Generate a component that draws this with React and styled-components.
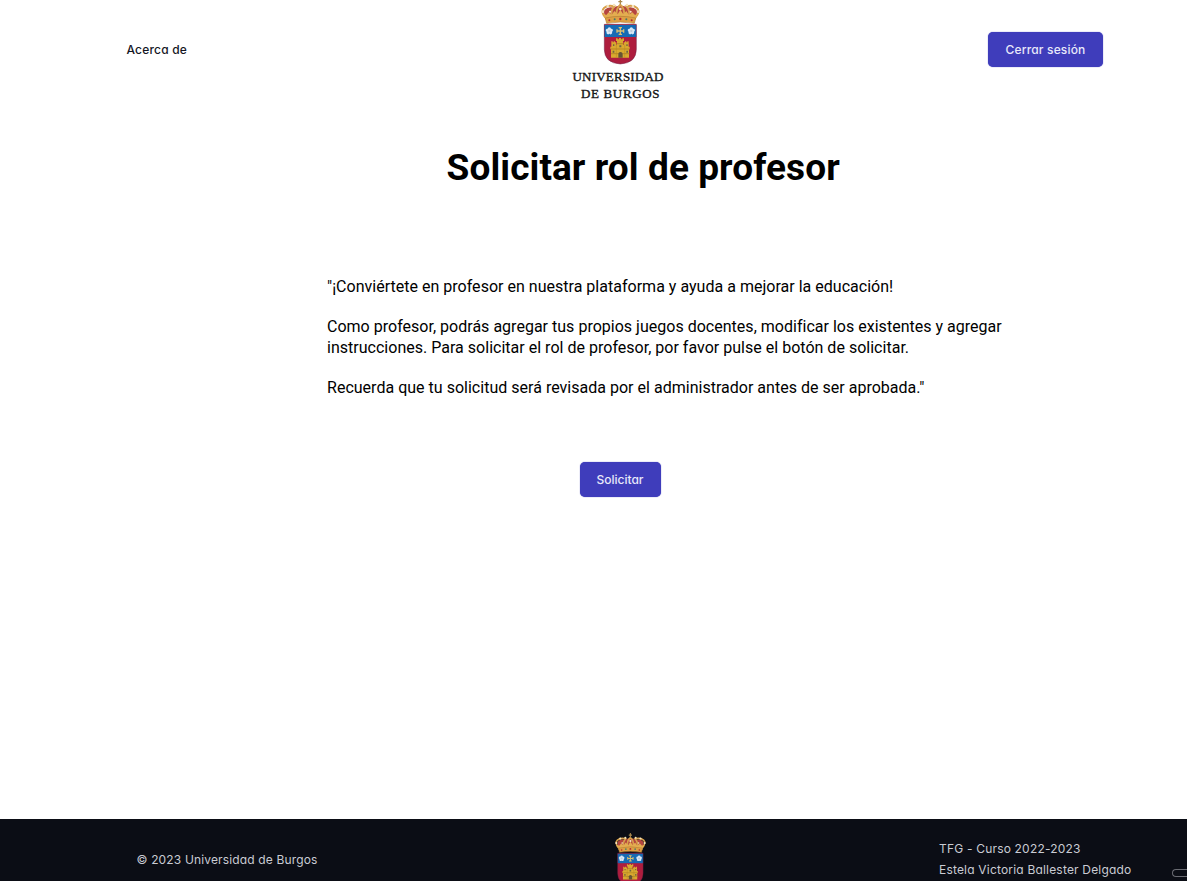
import React from 'react';
import styled, { createGlobalStyle } from 'styled-components';

const GlobalStyle = createGlobalStyle`
  * { box-sizing: border-box; }
  body { margin: 0; overflow: hidden; background: #fff; }
`;

const Page = styled.div`
  display: flex;
  flex-direction: column;
  height: 881px;
  overflow: hidden;
  color: #000;
  font-family: Roboto, 'Liberation Sans', sans-serif;
`;

const Header = styled.header`
  display: grid;
  grid-template-columns: 445.5px 92px 1fr;
  height: 102px;
  padding: 0 84px 0 126.5px;
  flex: none;
`;

const uiFont = `
  font-family: Inter, 'Liberation Sans', sans-serif;
  font-feature-settings: 'cv11';
`;

const NavLink = styled.a`
  ${uiFont}
  align-self: start;
  justify-self: start;
  margin-top: 40px;
  font-size: 12px;
  line-height: 20px;
  font-weight: 450;
  letter-spacing: 0.2px;
  color: #14151f;
  white-space: nowrap;
`;

const Brand = styled.div`
  display: flex;
  flex-direction: column;
  width: 92px;
`;

const BrandCrest = styled.div`
  height: 66px;
  margin: -1px 0 0 29px;
`;

const Wordmark = styled.svg`
  display: block;
  width: 92px;
  height: 36px;
  font-family: 'Liberation Serif', serif;
  fill: #151515;
  stroke: #151515;
  stroke-width: 0.35;
`;

const Button = styled.button`
  ${uiFont}
  flex: none;
  width: ${(p) => p.$width}px;
  height: 35px;
  padding: 0;
  border: 0;
  border-radius: 5px;
  background: #3f3dbb;
  color: #e8e9fa;
  font-size: 12px;
  line-height: ${(p) => p.$line || 35}px;
  font-weight: 500;
  letter-spacing: ${(p) => p.$spacing}px;
  box-shadow: 0 0 1px #3f3dbb;
`;

const HeaderAction = styled.div`
  display: flex;
  justify-content: flex-end;
  padding-top: 32px;
`;

const Main = styled.main`
  display: flex;
  flex-direction: column;
  flex: 1;
  padding-left: 327px;
`;

const Title = styled.h1`
  margin: 44px 0 0 119.6px;
  font-size: 37px;
  line-height: 44px;
  font-weight: 700;
  letter-spacing: 0.08px;
  white-space: nowrap;
`;

const Copy = styled.div`
  display: flex;
  flex-direction: column;
  gap: 20.2px;
  margin-top: 87px;
`;

const Paragraph = styled.p`
  margin: 0;
  font-size: 16px;
  line-height: 20.2px;
  white-space: nowrap;
  letter-spacing: 0.016px;
`;

const Action = styled.div`
  display: flex;
  margin: 64.2px 0 0 252.5px;
`;

const Footer = styled.footer`
  ${uiFont}
  display: grid;
  grid-template-columns: 478.5px 324px 1fr auto;
  flex: none;
  height: 62px;
  padding-left: 136.5px;
  background: #0b0d15;
  color: #c9cbd3;
  font-size: 12px;
  overflow: hidden;
`;

const FooterText = styled.div`
  padding-top: ${(p) => p.$top}px;
  line-height: 21px;
  letter-spacing: ${(p) => p.$spacing}px;
  white-space: nowrap;
`;

const FooterCrest = styled.div`
  padding-top: 13.5px;
`;

const Tab = styled.div`
  width: 15px;
  height: 8px;
  margin-top: 50px;
  border: 1px solid #6a6b72;
  border-right: 0;
  border-radius: 4px 0 0 4px;
`;

const CrestSvg = styled.svg`
  display: block;
  overflow: visible;
`;

function Rose({ x }) {
  return (
    <g transform={`translate(${x} 92)`}>
      {[0, 72, 144, 216, 288].map((a) => (
        <circle key={a} r="5" cx="0" cy="-6" fill="#d8e7f4" transform={`rotate(${a})`} />
      ))}
      <circle r="3.5" fill="#bccbd9" />
    </g>
  );
}

function Crest({ width }) {
  return (
    <CrestSvg width={width} height={(width * 196) / 117} viewBox="18 -4 117 196" aria-hidden="true">
      <path d="M76-4v18M70 4h12" stroke="#a98a4e" strokeWidth="4" />
      <path d="M32 51Q24 36 29 28 39 17 57 22 68 14 76 17 85 14 96 22 114 17 124 28 129 36 121 51Z" fill="#b5453f" />
      <path d="M31 52Q16 33 27 23T58 18Q46 30 50 50M121 52Q137 33 126 23T94 18Q106 30 102 50M76 13Q62 24 65 48M76 13Q90 24 87 48" fill="none" stroke="#d8a14c" strokeWidth="6" />
      <path d="M25 40l9 4 7-8 9 8 8-12 10 10 8-14 9 14 9-10 8 12 10-8 8 8 8-4-7 20H32Z" fill="#e3ad50" />
      <g fill="#f5e4bf">
        <circle cx="23" cy="34" r="4" /><circle cx="38" cy="17" r="4" /><circle cx="57" cy="14" r="4" />
        <circle cx="96" cy="14" r="4" /><circle cx="114" cy="17" r="4" /><circle cx="130" cy="34" r="4" />
        <circle cx="76" cy="26" r="4" /><circle cx="45" cy="34" r="3" /><circle cx="107" cy="34" r="3" />
      </g>
      <path d="M31 53Q76 43 122 53L118 69Q76 61 35 69Z" fill="#dda044" stroke="#b27b34" strokeWidth="2" />
      <circle cx="43" cy="60" r="3" fill="#b52338" /><circle cx="59" cy="57" r="3" fill="#487a65" />
      <circle cx="76" cy="56" r="3.5" fill="#b52338" /><circle cx="94" cy="57" r="3" fill="#487a65" />
      <circle cx="110" cy="60" r="3" fill="#b52338" />
      <path d="M28 72H124V147Q124 188 76 191 28 188 28 147Z" fill="#ae1d3e" />
      <path d="M28 74H124V110H28Z" fill="#166bb4" />
      <path d="M28 72H124V147Q124 188 76 191 28 188 28 147Z" fill="none" stroke="#6c1e42" strokeWidth="1.5" />
      <Rose x={43} /><Rose x={109} />
      <path d="M76 82v20M66 92h20M71 82h10M71 102h10M66 87v10M86 87v10" fill="none" stroke="#d9c071" strokeWidth="4" />
      <path d="M48 172V147h-2v-8h3v-16h4v3h3v-3h4v3h4v7h2v-11h-3v-8h5v3h4v-4h6v4h4v-3h5v8h-3v11h2v-7h4v-3h4v3h3v-3h4v16h3v8h-2v25Z" fill="#d9a92f" />
      <path d="M48 146H104M66 130H86M48 160H70M84 160H104" fill="none" stroke="#a8781f" strokeWidth="2" />
      <path d="M64 133v38M89 133v38" fill="none" stroke="#b58524" strokeWidth="1.5" />
      <path d="M70 172v-13q6-8 13 0v13Z" fill="#665335" />
      <path d="M53 157v-6h5v6ZM94 157v-6h5v6ZM73 141v-6h6v6ZM54 137v-5h4v5ZM94 137v-5h4v5Z" fill="#6d6640" />
    </CrestSvg>
  );
}

export default function App() {
  return (
    <>
      <GlobalStyle />
      <Page>
        <Header>
          <NavLink>Acerca de</NavLink>
          <Brand>
            <BrandCrest><Crest width={39} /></BrandCrest>
            <Wordmark viewBox="0 0 92 36">
              <text x="0.5" y="16" fontSize="13" textLength="91">UNIVERSIDAD</text>
              <text x="9" y="33" fontSize="13" textLength="78.5">DE BURGOS</text>
            </Wordmark>
          </Brand>
          <HeaderAction><Button $width={115} $spacing={0.17}>Cerrar sesión</Button></HeaderAction>
        </Header>
        <Main>
          <Title>Solicitar rol de profesor</Title>
          <Copy>
            <Paragraph>"¡Conviértete en profesor en nuestra plataforma y ayuda a mejorar la educación!</Paragraph>
            <Paragraph>
              Como profesor, podrás agregar tus propios juegos docentes, modificar los existentes y agregar
              <br />
              instrucciones. Para solicitar el rol de profesor, por favor pulse el botón de solicitar.
            </Paragraph>
            <Paragraph>Recuerda que tu solicitud será revisada por el administrador antes de ser aprobada."</Paragraph>
          </Copy>
          <Action><Button $width={81} $spacing={0} $line={33}>Solicitar</Button></Action>
        </Main>
        <Footer>
          <FooterText $top={30} $spacing={0.15}>© 2023 Universidad de Burgos</FooterText>
          <FooterCrest><Crest width={31} /></FooterCrest>
          <FooterText $top={19.4} $spacing={0.19}>TFG - Curso 2022-2023<br />Estela Victoria Ballester Delgado</FooterText>
          <Tab />
        </Footer>
      </Page>
    </>
  );
}
